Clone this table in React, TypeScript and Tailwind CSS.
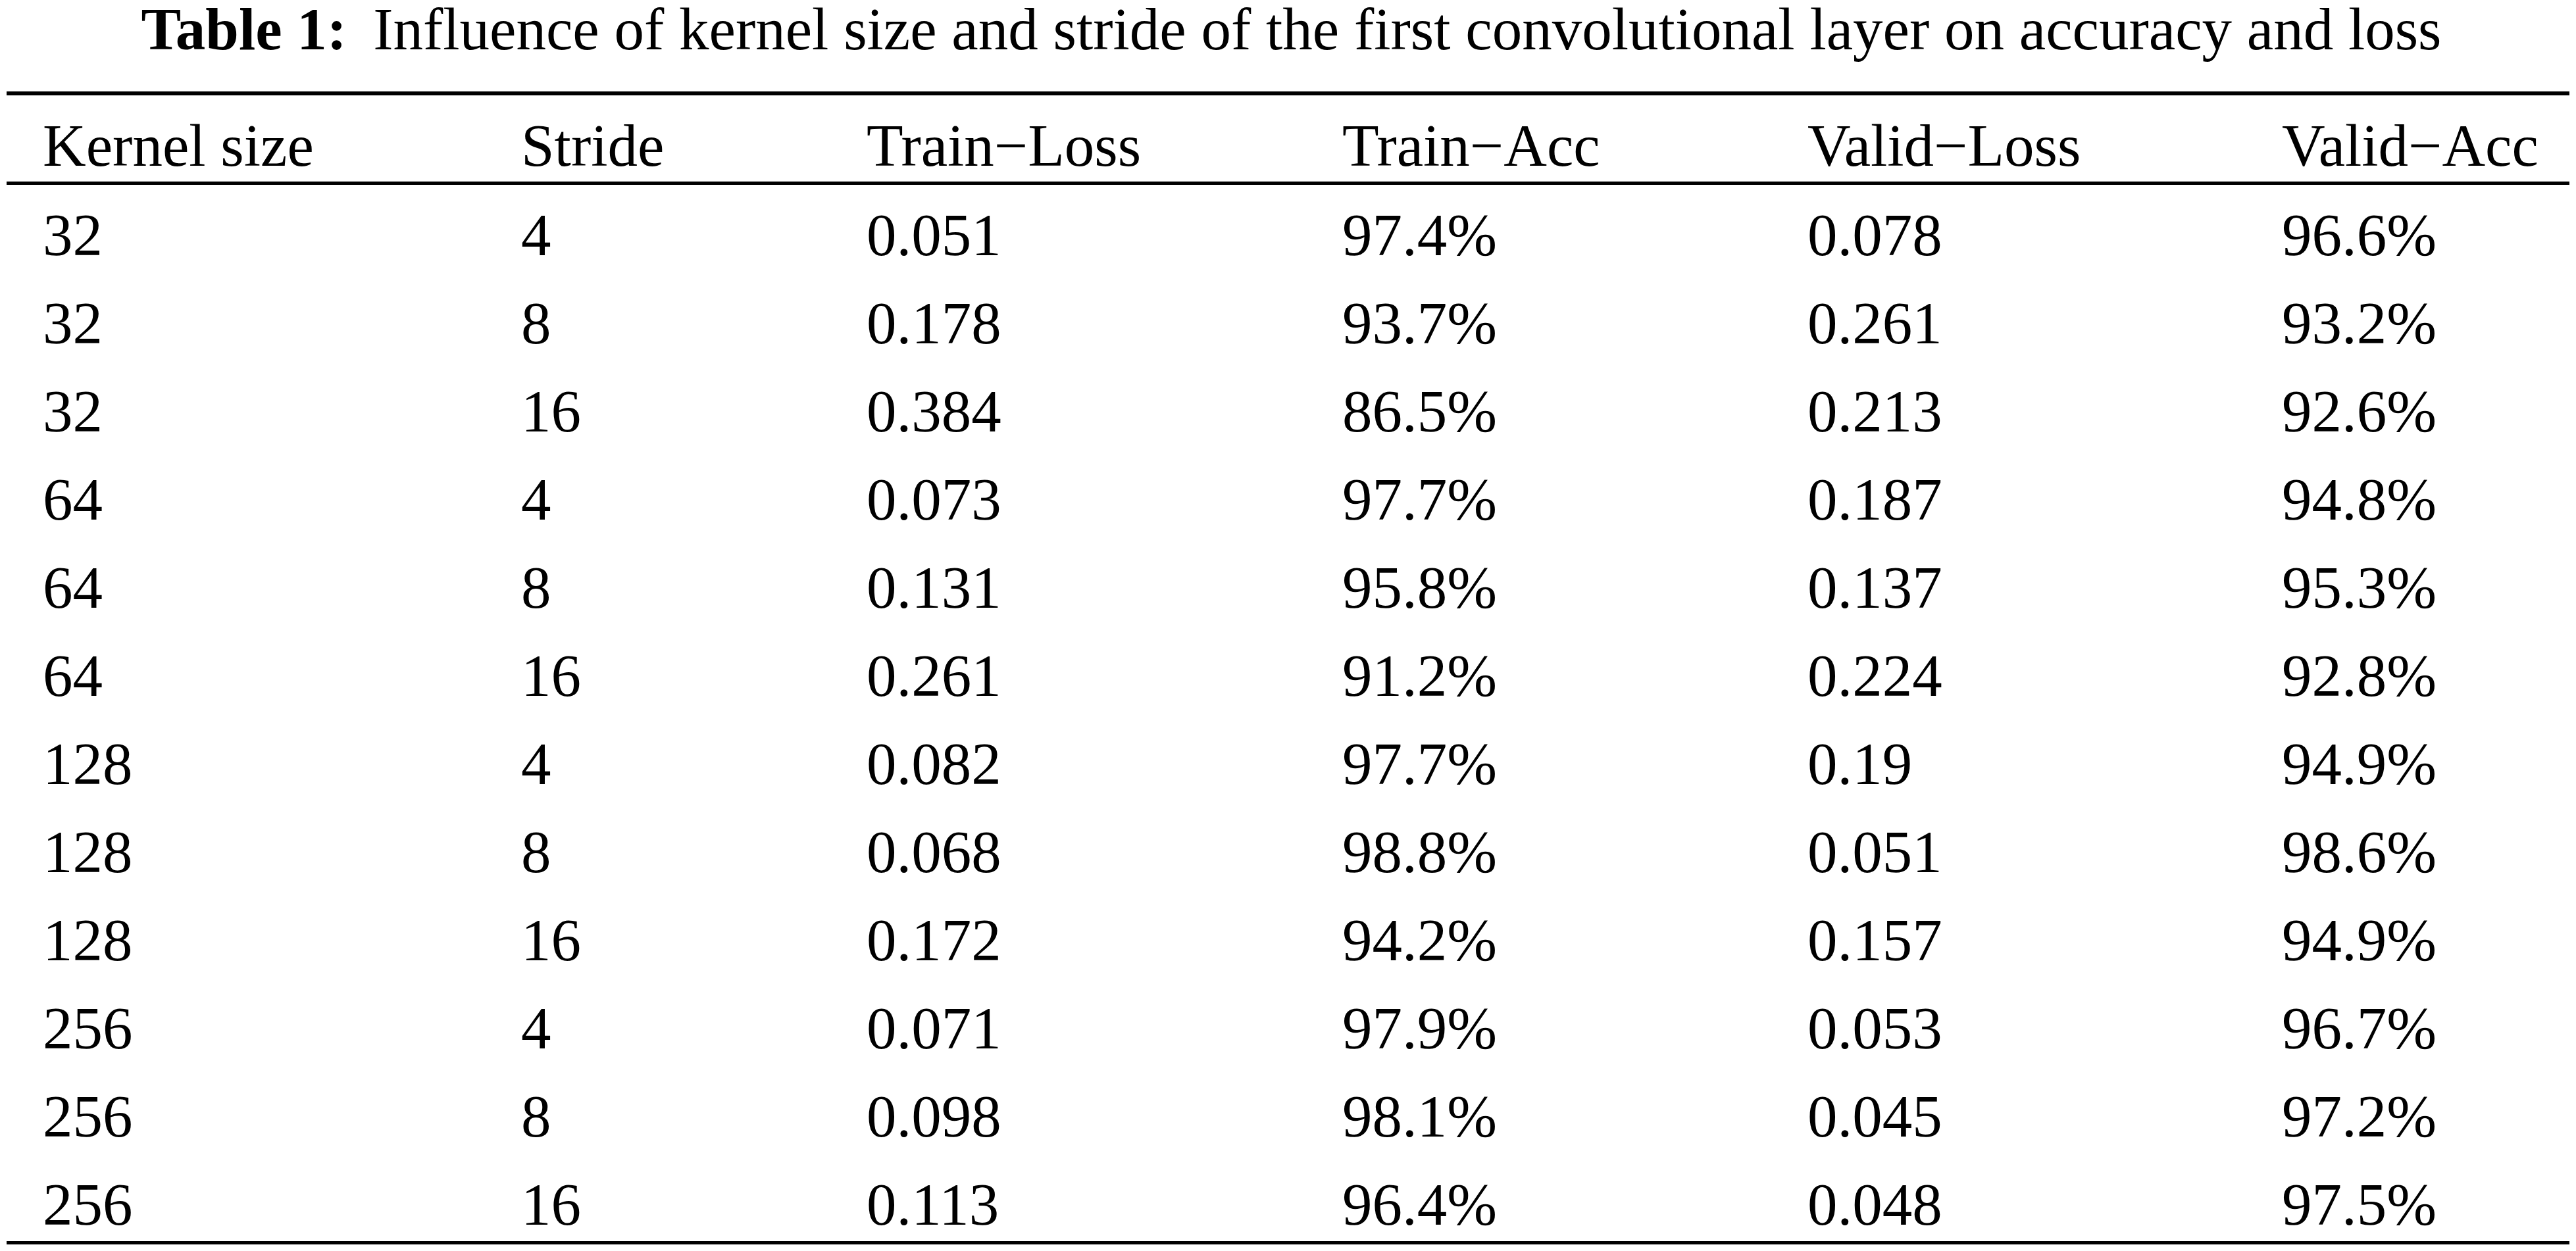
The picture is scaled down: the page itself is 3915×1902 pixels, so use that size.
import React from "react";

const rows: string[][] = [
  ["32", "4", "0.051", "97.4%", "0.078", "96.6%"],
  ["32", "8", "0.178", "93.7%", "0.261", "93.2%"],
  ["32", "16", "0.384", "86.5%", "0.213", "92.6%"],
  ["64", "4", "0.073", "97.7%", "0.187", "94.8%"],
  ["64", "8", "0.131", "95.8%", "0.137", "95.3%"],
  ["64", "16", "0.261", "91.2%", "0.224", "92.8%"],
  ["128", "4", "0.082", "97.7%", "0.19", "94.9%"],
  ["128", "8", "0.068", "98.8%", "0.051", "98.6%"],
  ["128", "16", "0.172", "94.2%", "0.157", "94.9%"],
  ["256", "4", "0.071", "97.9%", "0.053", "96.7%"],
  ["256", "8", "0.098", "98.1%", "0.045", "97.2%"],
  ["256", "16", "0.113", "96.4%", "0.048", "97.5%"],
];

const headers = ["Kernel size", "Stride", "Train\u2212Loss", "Train\u2212Acc", "Valid\u2212Loss", "Valid\u2212Acc"];

const gridCols = "grid grid-cols-[727px_525px_723px_707px_721px_1fr] pl-[55px]";

export default function App() {
  return (
    <div className="w-[3915px] h-[1902px] bg-white text-black font-['Liberation_Serif',serif] text-[91px] overflow-hidden">
      <div className="text-center leading-[90px] pl-[10px] whitespace-nowrap">
        <span className="font-bold mr-[40px]">Table 1:</span>
        <span>Influence of kernel size and stride of the first convolutional layer on accuracy and loss</span>
      </div>
      <div className="mx-[10px] mt-[49px]">
        <div className="h-[6px] bg-black" />
        <div className={`${gridCols} pt-[32px] pb-[9px] leading-[90px]`}>
          {headers.map((h) => (
            <div key={h} className="whitespace-nowrap">{h}</div>
          ))}
        </div>
        <div className="h-[5px] bg-black" />
        {rows.map((r, i) => (
          <div
            key={i}
            className={`${gridCols} pt-[32px] leading-[90px] ${i === rows.length - 1 ? "pb-[10px]" : "pb-[12px]"}`}
          >
            {r.map((c, j) => (
              <div key={j} className="whitespace-nowrap">{c}</div>
            ))}
          </div>
        ))}
        <div className="h-[5px] bg-black" />
      </div>
    </div>
  );
}
